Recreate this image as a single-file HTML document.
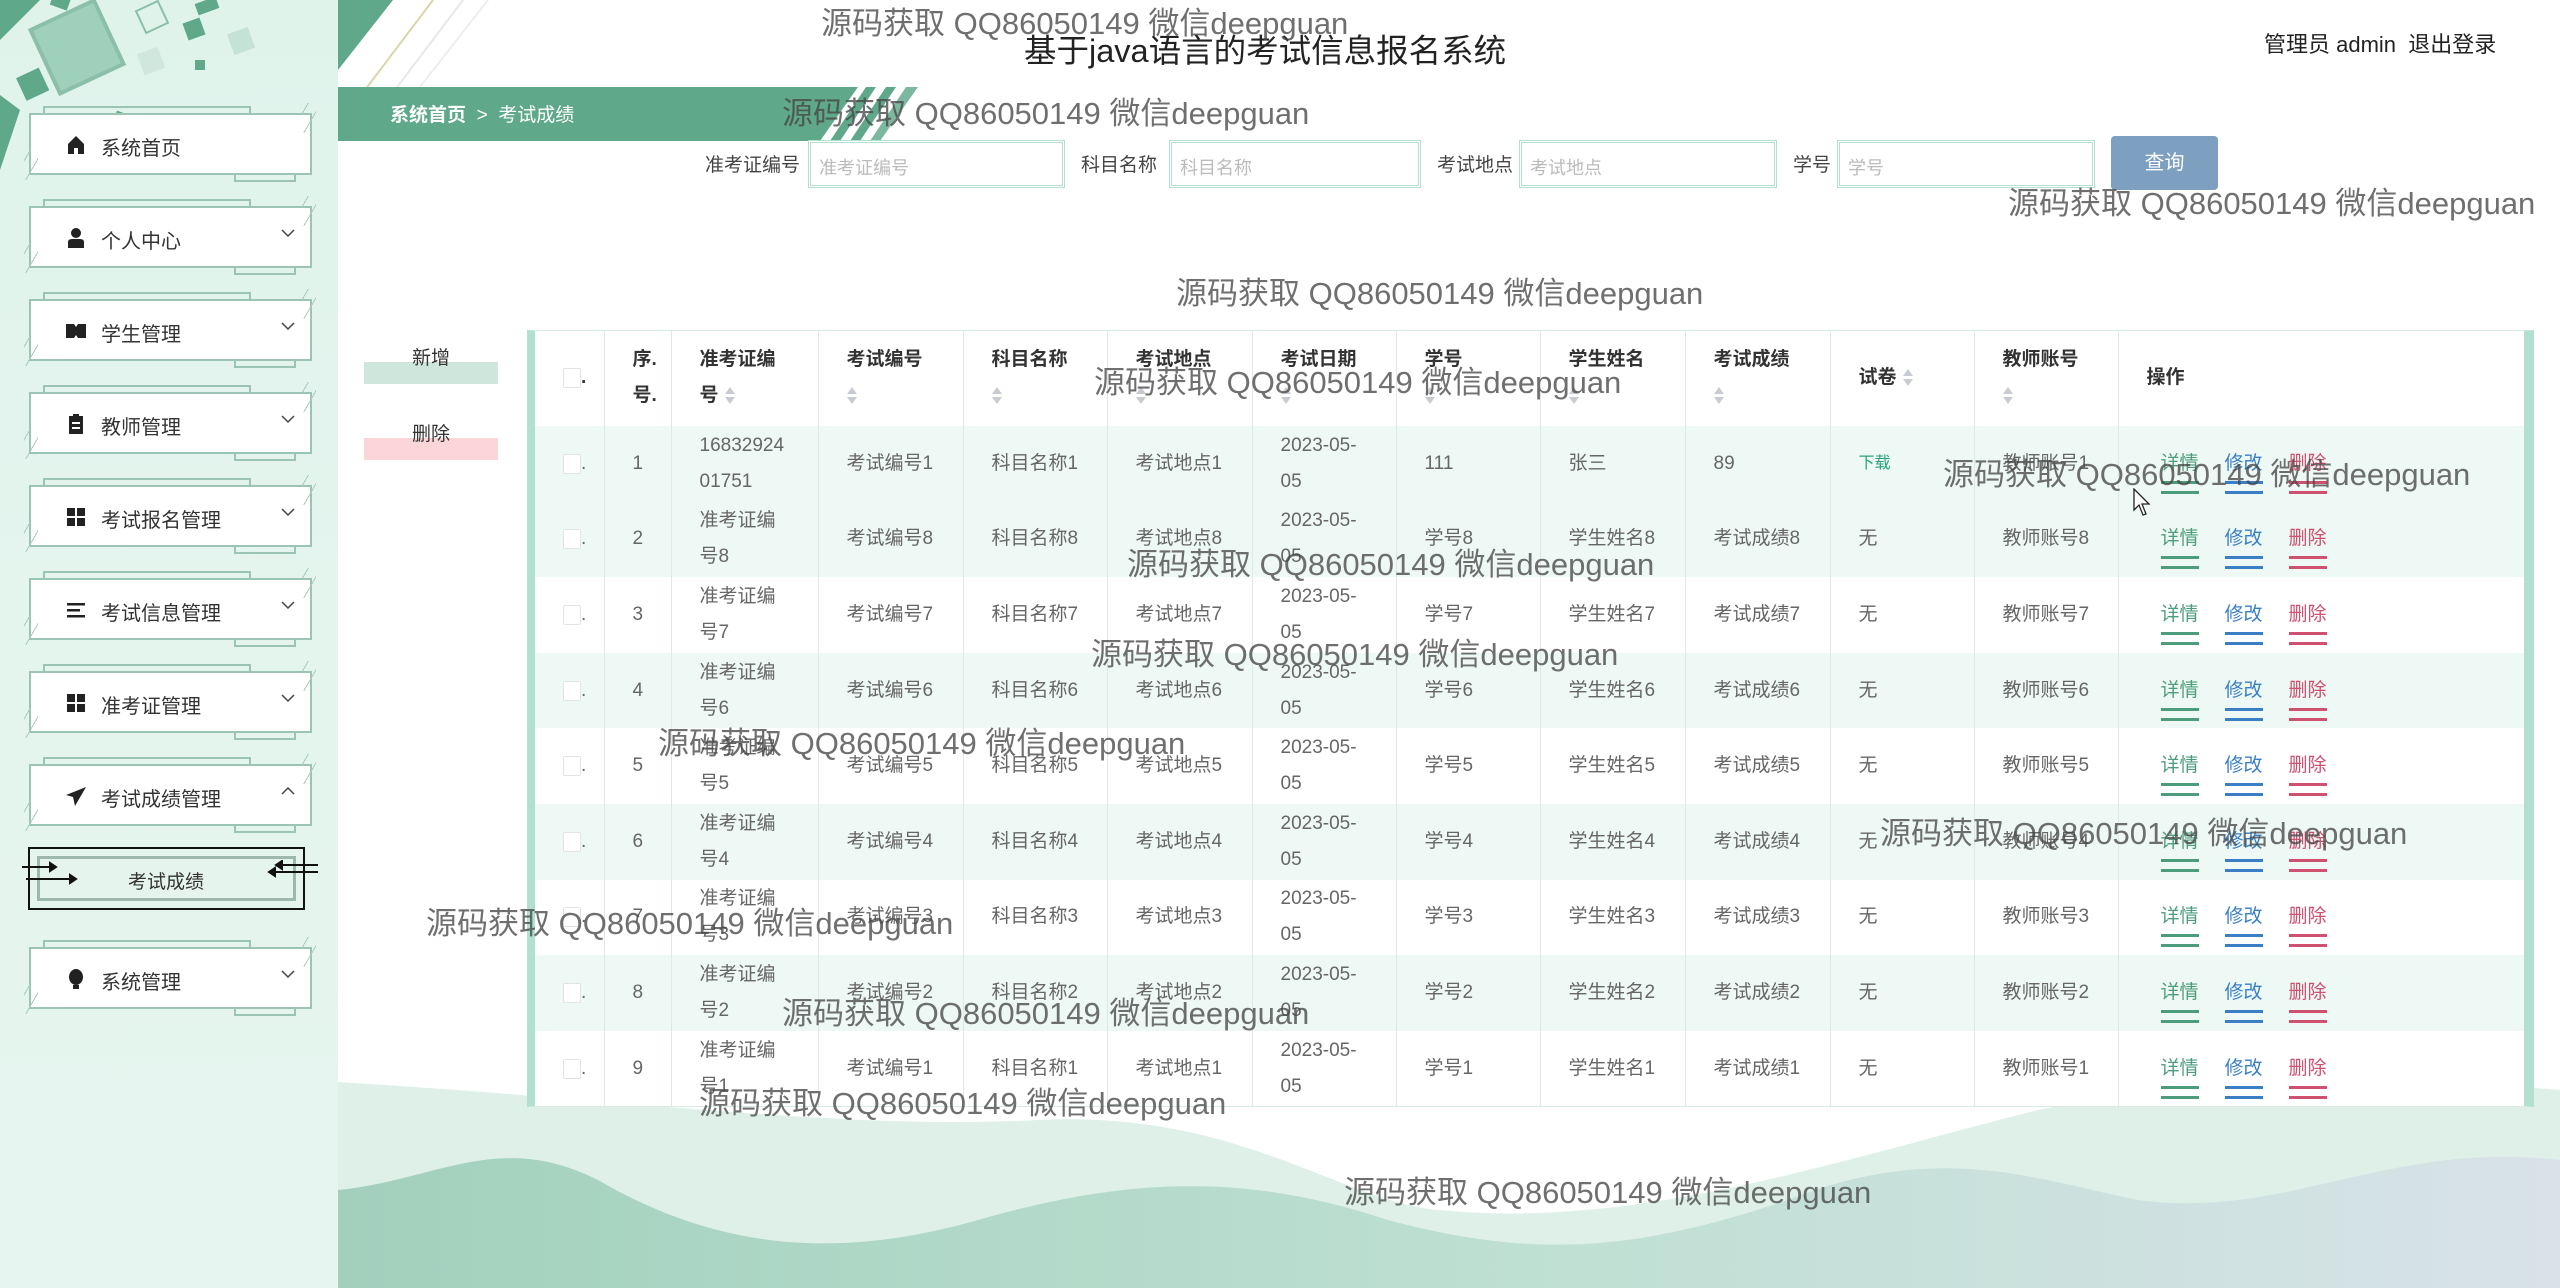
<!DOCTYPE html>
<html><head><meta charset="utf-8">
<style>
*{margin:0;padding:0;box-sizing:border-box}
body{width:2560px;height:1288px;overflow:hidden;position:relative;background:#fff;font-family:"Liberation Sans","Noto Sans CJK SC",sans-serif;color:#333}
.abs{position:absolute}
#side{position:absolute;left:0;top:0;width:338px;height:1288px;background:linear-gradient(180deg,#dff3eb 0%,#e4f5ee 50%,#e6f5ef 100%)}
.mi{position:absolute;left:29px;width:283px;height:62px;background:#fff;border:2px solid #9cc4b4;font-size:20px;color:#333}
.mi:before{content:"";position:absolute;left:12px;top:-9px;width:204px;height:7px;border:2px solid #9cc4b4;border-bottom:none}
.mi:after{content:"";position:absolute;left:203px;bottom:-9px;width:58px;height:7px;border:2px solid #9cc4b4;border-top:none}
.mi .ic{position:absolute;left:34px;top:19px;width:22px;height:22px}
.mi .tx{position:absolute;left:70px;top:17px}
.mi .ch{position:absolute;left:248px;top:16px;width:18px;height:18px}
.hatch{position:absolute;width:14px;height:30px;background:repeating-linear-gradient(120deg,transparent 0 5px,#a9cbbd 5px 6px,transparent 6px 11px)}
.wm{position:absolute;font-size:31px;color:rgba(70,70,70,.78);white-space:nowrap;font-family:"Liberation Sans","Noto Sans CJK SC",sans-serif;z-index:20}
.lbl{position:absolute;top:150px;font-size:19px;color:#444}
.inp{position:absolute;top:140px;height:48px;border:3px double #b5e0d0;background:#fff;font-size:18px;color:#bbb;padding:11px 8px}
table{position:absolute;left:535px;top:330px;width:1989px;border-collapse:collapse;table-layout:fixed;font-size:19px;color:#666}
td,th{border-left:1px solid #dde9e5;vertical-align:middle;text-align:left;padding:0 0 0 28px;line-height:36px;white-space:nowrap}
th{height:96px;font-weight:bold;color:#333;font-size:19px}
td{height:75.6px}
tr.g td{background:#eef8f4}
.cb{display:inline-block;width:18px;height:20px;border:1px solid #e3e3e3;background:#fff;vertical-align:middle;border-radius:2px}
.so{display:inline-block;width:10px;height:20px;vertical-align:middle;margin-left:6px;position:relative}
.so:before{content:"";position:absolute;left:0;top:1px;border:5px solid transparent;border-bottom:7px solid #c8ccd2;border-top:0}
.so:after{content:"";position:absolute;left:0;top:11px;border:5px solid transparent;border-top:7px solid #c8ccd2;border-bottom:0}
td.ops{padding-left:42px}
.op{display:inline-block;margin-right:26px;position:relative;font-size:19px}
.op:after{content:"";position:absolute;left:0;right:0;bottom:-12px;height:7px;border-top:3px solid currentColor;border-bottom:3px solid currentColor}
.d1{color:#4d9c7c}.d2{color:#3a7fc6}.d3{color:#d05070}
</style></head><body>

<svg class="abs" style="left:338px;top:960px" width="2222" height="328" viewBox="0 0 2222 328">
<defs><linearGradient id="gb" x1="0" x2="1"><stop offset="0" stop-color="#a2d0bd"/><stop offset=".55" stop-color="#bfe0d3"/><stop offset="1" stop-color="#d8e2e8"/></linearGradient></defs>
<path d="M0 122 C300 140 500 170 700 160 C900 150 1000 240 1100 250 C1300 270 1500 200 1700 150 C1900 110 2100 120 2222 130 L2222 328 L0 328Z" fill="#dff0e9"/>
<path d="M0 230 C100 220 160 170 260 220 C380 290 500 300 640 260 C780 220 900 210 1050 260 C1200 300 1300 290 1450 240 C1600 180 1700 220 1800 240 C1950 260 2050 180 2222 200 L2222 328 L0 328Z" fill="url(#gb)"/>
</svg>

<div id="side">
<svg class="abs" style="left:0;top:0" width="338" height="170" viewBox="0 0 338 170">
<path d="M0 0 L40 0 L0 40Z" fill="#5fa88a"/>
<rect x="52" y="-10" width="18" height="18" fill="#5fa88a" transform="rotate(20 61 0)"/>
<rect x="196" y="0" width="22" height="12" fill="#5fa88a" transform="rotate(-20 207 6)"/>
<rect x="42" y="12" width="70" height="70" fill="#9fd0bc" stroke="#8cbfa9" stroke-width="4" transform="rotate(-25 77 47)"/>
<rect x="20" y="72" width="25" height="25" fill="#5fa88a" transform="rotate(-25 32 84)"/>
<rect x="185" y="20" width="18" height="18" fill="#5fa88a" transform="rotate(-20 194 29)"/>
<rect x="230" y="30" width="22" height="22" fill="#c5e2d6" transform="rotate(-20 241 41)"/>
<rect x="140" y="50" width="22" height="22" fill="#cfe7dd" transform="rotate(-20 151 61)"/>
<rect x="195" y="60" width="10" height="10" fill="#5fa88a"/>
<rect x="115" y="112" width="10" height="10" fill="#5fa88a" transform="rotate(20 120 117)"/>
<path d="M0 95 L20 110 L0 170Z" fill="#5fa88a"/>
<rect x="140" y="5" width="24" height="24" fill="none" stroke="#8cbfa9" stroke-width="2" transform="rotate(-25 152 17)"/>
</svg>
</div>

<div class="mi" style="top:113px"><svg class="ic" viewBox="0 0 22 22"><path d="M3 10 L11 2 L19 10 V20 H13 V14 H9 V20 H3Z" fill="#222"/></svg><span class="tx">系统首页</span></div>
<div class="mi" style="top:206px"><svg class="ic" viewBox="0 0 22 22"><circle cx="11" cy="6" r="5" fill="#222"/><path d="M3 21 V15 Q3 12 7 12 H15 Q19 12 19 15 V21Z" fill="#222"/></svg><span class="tx">个人中心</span><svg class="ch" viewBox="0 0 18 18"><path d="M3 6 L9 12 L15 6" fill="none" stroke="#444" stroke-width="1.5"/></svg></div>
<div class="mi" style="top:299px"><svg class="ic" viewBox="0 0 22 22"><path d="M1 4 H9 L11 7 L13 4 H21 V18 H13 L11 15 L9 18 H1Z" fill="#222"/></svg><span class="tx">学生管理</span><svg class="ch" viewBox="0 0 18 18"><path d="M3 6 L9 12 L15 6" fill="none" stroke="#444" stroke-width="1.5"/></svg></div>
<div class="mi" style="top:392px"><svg class="ic" viewBox="0 0 22 22"><path d="M4 3 H8 V1 H14 V3 H18 V21 H4Z" fill="#222"/><rect x="7" y="9" width="8" height="2" fill="#fff"/><rect x="7" y="14" width="8" height="2" fill="#fff"/></svg><span class="tx">教师管理</span><svg class="ch" viewBox="0 0 18 18"><path d="M3 6 L9 12 L15 6" fill="none" stroke="#444" stroke-width="1.5"/></svg></div>
<div class="mi" style="top:485px"><svg class="ic" viewBox="0 0 22 22"><rect x="2" y="2" width="8" height="8" fill="#222"/><rect x="12" y="2" width="8" height="8" fill="#222"/><rect x="2" y="12" width="8" height="8" fill="#222"/><rect x="12" y="12" width="8" height="8" fill="#222"/></svg><span class="tx">考试报名管理</span><svg class="ch" viewBox="0 0 18 18"><path d="M3 6 L9 12 L15 6" fill="none" stroke="#444" stroke-width="1.5"/></svg></div>
<div class="mi" style="top:578px"><svg class="ic" viewBox="0 0 22 22"><rect x="2" y="4" width="18" height="2.5" fill="#222"/><rect x="2" y="10" width="13" height="2.5" fill="#222"/><rect x="2" y="16" width="18" height="2.5" fill="#222"/></svg><span class="tx">考试信息管理</span><svg class="ch" viewBox="0 0 18 18"><path d="M3 6 L9 12 L15 6" fill="none" stroke="#444" stroke-width="1.5"/></svg></div>
<div class="mi" style="top:671px"><svg class="ic" viewBox="0 0 22 22"><rect x="2" y="2" width="8" height="8" fill="#222"/><rect x="12" y="2" width="8" height="8" fill="#222"/><rect x="2" y="12" width="8" height="8" fill="#222"/><rect x="12" y="12" width="8" height="8" fill="#222"/></svg><span class="tx">准考证管理</span><svg class="ch" viewBox="0 0 18 18"><path d="M3 6 L9 12 L15 6" fill="none" stroke="#444" stroke-width="1.5"/></svg></div>
<div class="mi" style="top:764px"><svg class="ic" viewBox="0 0 22 22"><path d="M21 2 L1 10 L8 12 L10 21 Z" fill="#222"/></svg><span class="tx">考试成绩管理</span><svg class="ch" viewBox="0 0 18 18"><path d="M3 12 L9 6 L15 12" fill="none" stroke="#444" stroke-width="1.5"/></svg></div>
<div class="mi" style="top:947px"><svg class="ic" viewBox="0 0 22 22"><ellipse cx="11" cy="9" rx="7" ry="8" fill="#222"/><rect x="8" y="17" width="6" height="4" fill="#222"/></svg><span class="tx">系统管理</span><svg class="ch" viewBox="0 0 18 18"><path d="M3 6 L9 12 L15 6" fill="none" stroke="#444" stroke-width="1.5"/></svg></div>
<div class="hatch" style="left:24px;top:150px"></div><div class="hatch" style="left:302px;top:103px"></div>
<div class="hatch" style="left:24px;top:243px"></div><div class="hatch" style="left:302px;top:196px"></div>
<div class="hatch" style="left:24px;top:336px"></div><div class="hatch" style="left:302px;top:289px"></div>
<div class="hatch" style="left:24px;top:429px"></div><div class="hatch" style="left:302px;top:382px"></div>
<div class="hatch" style="left:24px;top:522px"></div><div class="hatch" style="left:302px;top:475px"></div>
<div class="hatch" style="left:24px;top:615px"></div><div class="hatch" style="left:302px;top:568px"></div>
<div class="hatch" style="left:24px;top:708px"></div><div class="hatch" style="left:302px;top:661px"></div>
<div class="hatch" style="left:24px;top:801px"></div><div class="hatch" style="left:302px;top:754px"></div>
<div class="hatch" style="left:24px;top:984px"></div><div class="hatch" style="left:302px;top:937px"></div>

<div class="abs" style="left:28px;top:847px;width:277px;height:63px;border:2px solid #111;background:#e6f4ee">
 <div class="abs" style="left:7px;top:7px;right:7px;bottom:7px;border:3px solid #9fb8ae"></div>
 <div class="abs" style="left:98px;top:18px;font-size:19px;color:#333">考试成绩</div>
</div>
<svg class="abs" style="left:20px;top:860px" width="300" height="30"><g stroke="#111" stroke-width="2" fill="#111">
<line x1="2" y1="7" x2="30" y2="7"/><path d="M30 3 L36 7 L30 11Z"/><line x1="6" y1="19" x2="50" y2="19"/><path d="M50 15 L56 19 L50 23Z"/>
<line x1="262" y1="5" x2="298" y2="5"/><line x1="255" y1="12" x2="298" y2="12"/><path d="M262 1 L256 5 L262 9Z"/><path d="M255 8 L249 12 L255 16Z"/></g></svg>

<svg class="abs" style="left:338px;top:0" width="800" height="145" viewBox="0 0 800 145">
<path d="M0 0 L55 0 L0 70Z" fill="#5fa88a"/>
<line x1="8" y1="115" x2="95" y2="0" stroke="#d8d6a8" stroke-width="2"/>
<line x1="38" y1="115" x2="125" y2="0" stroke="#e8e8e8" stroke-width="2"/>
<line x1="60" y1="115" x2="150" y2="0" stroke="#eeeeee" stroke-width="2"/>
<path d="M0 87 H520 L482 141 H0Z" fill="#5fa88a"/>
<path d="M492 141 L528 87 H538 L502 141Z" fill="#5fa88a"/>
<path d="M512 141 L548 87 H558 L522 141Z" fill="#5fa88a"/>
<path d="M532 141 L568 87 H580 L542 141Z" fill="#7bb89f"/>
</svg>
<div class="abs" style="left:390px;top:100px;font-size:19px;color:#fff"><b>系统首页</b>&nbsp;&nbsp;&gt;&nbsp;&nbsp;考试成绩</div>
<div class="abs" style="left:1024px;top:25px;font-size:32.5px;color:#222">基于java语言的考试信息报名系统</div>
<div class="abs" style="left:2264px;top:27px;font-size:22px;color:#222">管理员 admin&nbsp;&nbsp;退出登录</div>

<div class="lbl" style="left:705px">准考证编号</div><div class="inp" style="left:808px;width:257px">准考证编号</div>
<div class="lbl" style="left:1081px">科目名称</div><div class="inp" style="left:1169px;width:252px">科目名称</div>
<div class="lbl" style="left:1437px">考试地点</div><div class="inp" style="left:1519px;width:258px">考试地点</div>
<div class="lbl" style="left:1793px">学号</div><div class="inp" style="left:1837px;width:258px">学号</div>
<div class="abs" style="left:2111px;top:136px;width:107px;height:54px;background:#7d9fc0;border-radius:4px;color:#fff;font-size:20px;text-align:center;line-height:54px">查询</div>

<div class="abs" style="left:364px;top:362px;width:134px;height:22px;background:#cfe6dd"></div>
<div class="abs" style="left:412px;top:343px;font-size:19px;color:#333">新增</div>
<div class="abs" style="left:364px;top:438px;width:134px;height:22px;background:#fbd5d8"></div>
<div class="abs" style="left:412px;top:419px;font-size:19px;color:#333">删除</div>

<div class="abs" style="left:527px;top:330px;width:2007px;height:777px;background:#fff;border:1px solid #d8ebe4;border-left:8px solid #b2e0d0;border-right:10px solid #b2e0d0"></div>
<table>
<colgroup><col style="width:69px"><col style="width:67px"><col style="width:147px"><col style="width:145px"><col style="width:144px"><col style="width:145px"><col style="width:144px"><col style="width:144px"><col style="width:145px"><col style="width:145px"><col style="width:144px"><col style="width:144px"><col style="width:406px"></colgroup>
<tr><th style="border-left:none"><span class="cb"></span>.</th><th>序.<br>号.</th><th>准考证编<br>号<span class="so"></span></th><th>考试编号<br><span class="so" style="margin:0"></span></th><th>科目名称<br><span class="so" style="margin:0"></span></th><th>考试地点<br><span class="so" style="margin:0"></span></th><th>考试日期<br><span class="so" style="margin:0"></span></th><th>学号<br><span class="so" style="margin:0"></span></th><th>学生姓名<br><span class="so" style="margin:0"></span></th><th>考试成绩<br><span class="so" style="margin:0"></span></th><th>试卷<span class="so"></span></th><th>教师账号<br><span class="so" style="margin:0"></span></th><th>操作</th></tr>
<tr class="g"><td style="border-left:none"><span class="cb"></span>.</td><td>1</td><td>16832924<br>01751</td><td>考试编号1</td><td>科目名称1</td><td>考试地点1</td><td>2023-05-<br>05</td><td>111</td><td>张三</td><td>89</td><td style="color:#2aa37a;font-size:16px">下载</td><td>教师账号1</td><td class="ops"><span class="op d1">详情</span><span class="op d2">修改</span><span class="op d3">删除</span></td></tr>
<tr class="g"><td style="border-left:none"><span class="cb"></span>.</td><td>2</td><td>准考证编<br>号8</td><td>考试编号8</td><td>科目名称8</td><td>考试地点8</td><td>2023-05-<br>05</td><td>学号8</td><td>学生姓名8</td><td>考试成绩8</td><td>无</td><td>教师账号8</td><td class="ops"><span class="op d1">详情</span><span class="op d2">修改</span><span class="op d3">删除</span></td></tr>
<tr><td style="border-left:none"><span class="cb"></span>.</td><td>3</td><td>准考证编<br>号7</td><td>考试编号7</td><td>科目名称7</td><td>考试地点7</td><td>2023-05-<br>05</td><td>学号7</td><td>学生姓名7</td><td>考试成绩7</td><td>无</td><td>教师账号7</td><td class="ops"><span class="op d1">详情</span><span class="op d2">修改</span><span class="op d3">删除</span></td></tr>
<tr class="g"><td style="border-left:none"><span class="cb"></span>.</td><td>4</td><td>准考证编<br>号6</td><td>考试编号6</td><td>科目名称6</td><td>考试地点6</td><td>2023-05-<br>05</td><td>学号6</td><td>学生姓名6</td><td>考试成绩6</td><td>无</td><td>教师账号6</td><td class="ops"><span class="op d1">详情</span><span class="op d2">修改</span><span class="op d3">删除</span></td></tr>
<tr><td style="border-left:none"><span class="cb"></span>.</td><td>5</td><td>准考证编<br>号5</td><td>考试编号5</td><td>科目名称5</td><td>考试地点5</td><td>2023-05-<br>05</td><td>学号5</td><td>学生姓名5</td><td>考试成绩5</td><td>无</td><td>教师账号5</td><td class="ops"><span class="op d1">详情</span><span class="op d2">修改</span><span class="op d3">删除</span></td></tr>
<tr class="g"><td style="border-left:none"><span class="cb"></span>.</td><td>6</td><td>准考证编<br>号4</td><td>考试编号4</td><td>科目名称4</td><td>考试地点4</td><td>2023-05-<br>05</td><td>学号4</td><td>学生姓名4</td><td>考试成绩4</td><td>无</td><td>教师账号4</td><td class="ops"><span class="op d1">详情</span><span class="op d2">修改</span><span class="op d3">删除</span></td></tr>
<tr><td style="border-left:none"><span class="cb"></span>.</td><td>7</td><td>准考证编<br>号3</td><td>考试编号3</td><td>科目名称3</td><td>考试地点3</td><td>2023-05-<br>05</td><td>学号3</td><td>学生姓名3</td><td>考试成绩3</td><td>无</td><td>教师账号3</td><td class="ops"><span class="op d1">详情</span><span class="op d2">修改</span><span class="op d3">删除</span></td></tr>
<tr class="g"><td style="border-left:none"><span class="cb"></span>.</td><td>8</td><td>准考证编<br>号2</td><td>考试编号2</td><td>科目名称2</td><td>考试地点2</td><td>2023-05-<br>05</td><td>学号2</td><td>学生姓名2</td><td>考试成绩2</td><td>无</td><td>教师账号2</td><td class="ops"><span class="op d1">详情</span><span class="op d2">修改</span><span class="op d3">删除</span></td></tr>
<tr><td style="border-left:none"><span class="cb"></span>.</td><td>9</td><td>准考证编<br>号1</td><td>考试编号1</td><td>科目名称1</td><td>考试地点1</td><td>2023-05-<br>05</td><td>学号1</td><td>学生姓名1</td><td>考试成绩1</td><td>无</td><td>教师账号1</td><td class="ops"><span class="op d1">详情</span><span class="op d2">修改</span><span class="op d3">删除</span></td></tr>
</table>

<svg class="abs" style="left:2133px;top:488px;z-index:30" width="20" height="30" viewBox="0 0 20 30"><path d="M1 1 L1 22 L6 17 L10 27 L13 26 L9 16 L16 16Z" fill="#fff" stroke="#222" stroke-width="1.3"/></svg>

<div class="wm" style="left:821px;top:-2px">源码获取 QQ86050149 微信deepguan</div>
<div class="wm" style="left:782px;top:88px">源码获取 QQ86050149 微信deepguan</div>
<div class="wm" style="left:2008px;top:178px">源码获取 QQ86050149 微信deepguan</div>
<div class="wm" style="left:1176px;top:268px">源码获取 QQ86050149 微信deepguan</div>
<div class="wm" style="left:1094px;top:357px">源码获取 QQ86050149 微信deepguan</div>
<div class="wm" style="left:1943px;top:449px">源码获取 QQ86050149 微信deepguan</div>
<div class="wm" style="left:1127px;top:539px">源码获取 QQ86050149 微信deepguan</div>
<div class="wm" style="left:1091px;top:629px">源码获取 QQ86050149 微信deepguan</div>
<div class="wm" style="left:658px;top:718px">源码获取 QQ86050149 微信deepguan</div>
<div class="wm" style="left:1880px;top:808px">源码获取 QQ86050149 微信deepguan</div>
<div class="wm" style="left:426px;top:898px">源码获取 QQ86050149 微信deepguan</div>
<div class="wm" style="left:782px;top:988px">源码获取 QQ86050149 微信deepguan</div>
<div class="wm" style="left:699px;top:1078px">源码获取 QQ86050149 微信deepguan</div>
<div class="wm" style="left:1344px;top:1167px">源码获取 QQ86050149 微信deepguan</div>
</body></html>
